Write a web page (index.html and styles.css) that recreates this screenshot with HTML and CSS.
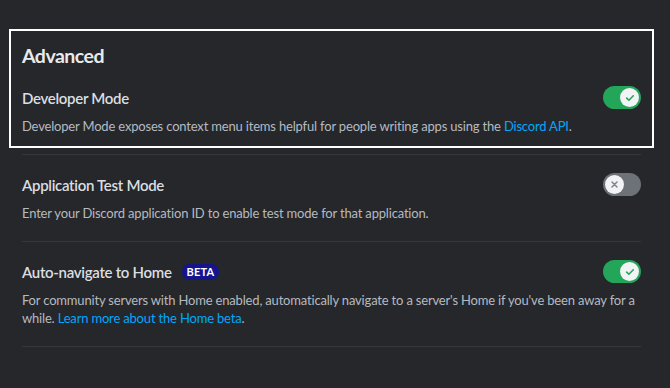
FILE: index.html
```html
<!DOCTYPE html>
<html>
<head>
<meta charset="utf-8">
<link rel="stylesheet" href="styles.css">
</head>
<body>
<div class="page">
  <section class="advanced">
    <h2 class="heading">Advanced</h2>
    <div class="row first">
      <div class="row-head">
        <span class="title">Developer Mode</span>
        <span class="switch on"><span class="knob"><svg viewBox="0 0 20 20" width="12" height="12"><path d="M4.5 10.2l3.6 3.6 7.4-7.6" fill="none" stroke="#23a55a" stroke-width="2.6" stroke-linecap="round" stroke-linejoin="round"/></svg></span></span>
      </div>
      <p class="desc">Developer Mode exposes context menu items helpful for people writing apps using the <a class="link">Discord API</a>.</p>
    </div>
  </section>
  <div class="divider"></div>
  <div class="row">
    <div class="row-head">
      <span class="title">Application Test Mode</span>
      <span class="switch off"><span class="knob"><svg viewBox="0 0 20 20" width="11" height="11"><path d="M5.5 5.5l9 9M14.5 5.5l-9 9" fill="none" stroke="#80848e" stroke-width="2.8" stroke-linecap="round"/></svg></span></span>
    </div>
    <p class="desc">Enter your Discord application ID to enable test mode for that application.</p>
  </div>
  <div class="divider"></div>
  <div class="row">
    <div class="row-head">
      <span class="title">Auto-navigate to Home <span class="badge">BETA</span></span>
      <span class="switch on"><span class="knob"><svg viewBox="0 0 20 20" width="12" height="12"><path d="M4.5 10.2l3.6 3.6 7.4-7.6" fill="none" stroke="#23a55a" stroke-width="2.6" stroke-linecap="round" stroke-linejoin="round"/></svg></span></span>
    </div>
    <p class="desc">For community servers with Home enabled, automatically navigate to a server's Home if you've been away for a while. <a class="link">Learn more about the Home beta</a>.</p>
  </div>
  <div class="divider"></div>
</div>
</body>
</html>
```
FILE: styles.css
```css
html, body {
  margin: 0;
  padding: 0;
  background: #25272a;
  height: 100%;
}
body {
  font-family: Lato, "Noto Sans", sans-serif;
  color: #dbdee1;
}
.page {
  padding: 42px 29px 0 22px;
}
.advanced {
  outline: 2px solid #ffffff;
  outline-offset: 11px;
}
.heading {
  margin: 0;
  font-size: 19.5px;
  line-height: 28px;
  font-weight: 700;
  letter-spacing: -0.5px;
  color: #e8eaed;
}
.row {
  margin-top: 18px;
}
.row.first {
  margin-top: 16px;
}
.row-head {
  display: flex;
  align-items: center;
  justify-content: space-between;
  height: 23px;
}
.title {
  font-size: 15px;
  font-weight: 600;
  line-height: 20px;
  letter-spacing: -0.3px;
  color: #dbdee1;
  display: flex;
  align-items: center;
}
.desc {
  margin: 8px 0 0;
  font-size: 13px;
  line-height: 18px;
  letter-spacing: -0.18px;
  color: #b5bac1;
}
.link {
  color: #00a8fc;
}
.divider {
  height: 1px;
  background: #35373b;
  margin-top: 19px;
}
.switch {
  width: 38px;
  height: 23px;
  border-radius: 12px;
  display: flex;
  align-items: center;
  padding: 0 2px;
  box-sizing: border-box;
}
.switch.on {
  background: #23a55a;
  justify-content: flex-end;
}
.switch.off {
  background: #6d7178;
  justify-content: flex-start;
}
.knob {
  width: 19px;
  height: 19px;
  border-radius: 50%;
  background: #f2f3f5;
  display: flex;
  align-items: center;
  justify-content: center;
}
.badge {
  margin-left: 10px;
  background: #14148c;
  color: #ffffff;
  font-size: 11px;
  font-weight: 700;
  line-height: 16px;
  padding: 0 5px;
  border-radius: 8px;
  letter-spacing: 0.2px;
}
```
